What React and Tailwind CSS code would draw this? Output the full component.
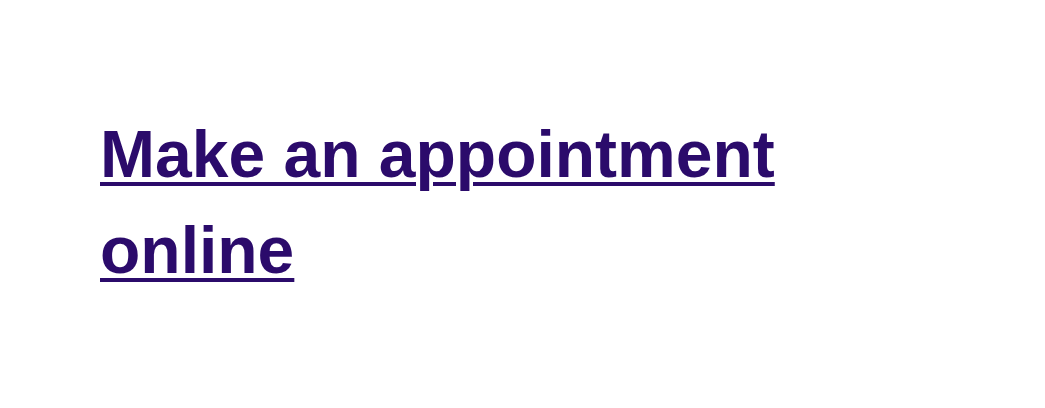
export default function App() {
  return (
    <div className="w-[1045px] h-[408px] bg-white pt-[106px] pl-[100px]">
      <a
        href="#"
        className="block w-[720px] font-['Liberation_Sans',Arial,sans-serif] font-bold text-[66px] leading-[96px] text-[#2b0b6b] underline decoration-[4px] underline-offset-[5px]"
      >
        Make an appointment online
      </a>
    </div>
  );
}
